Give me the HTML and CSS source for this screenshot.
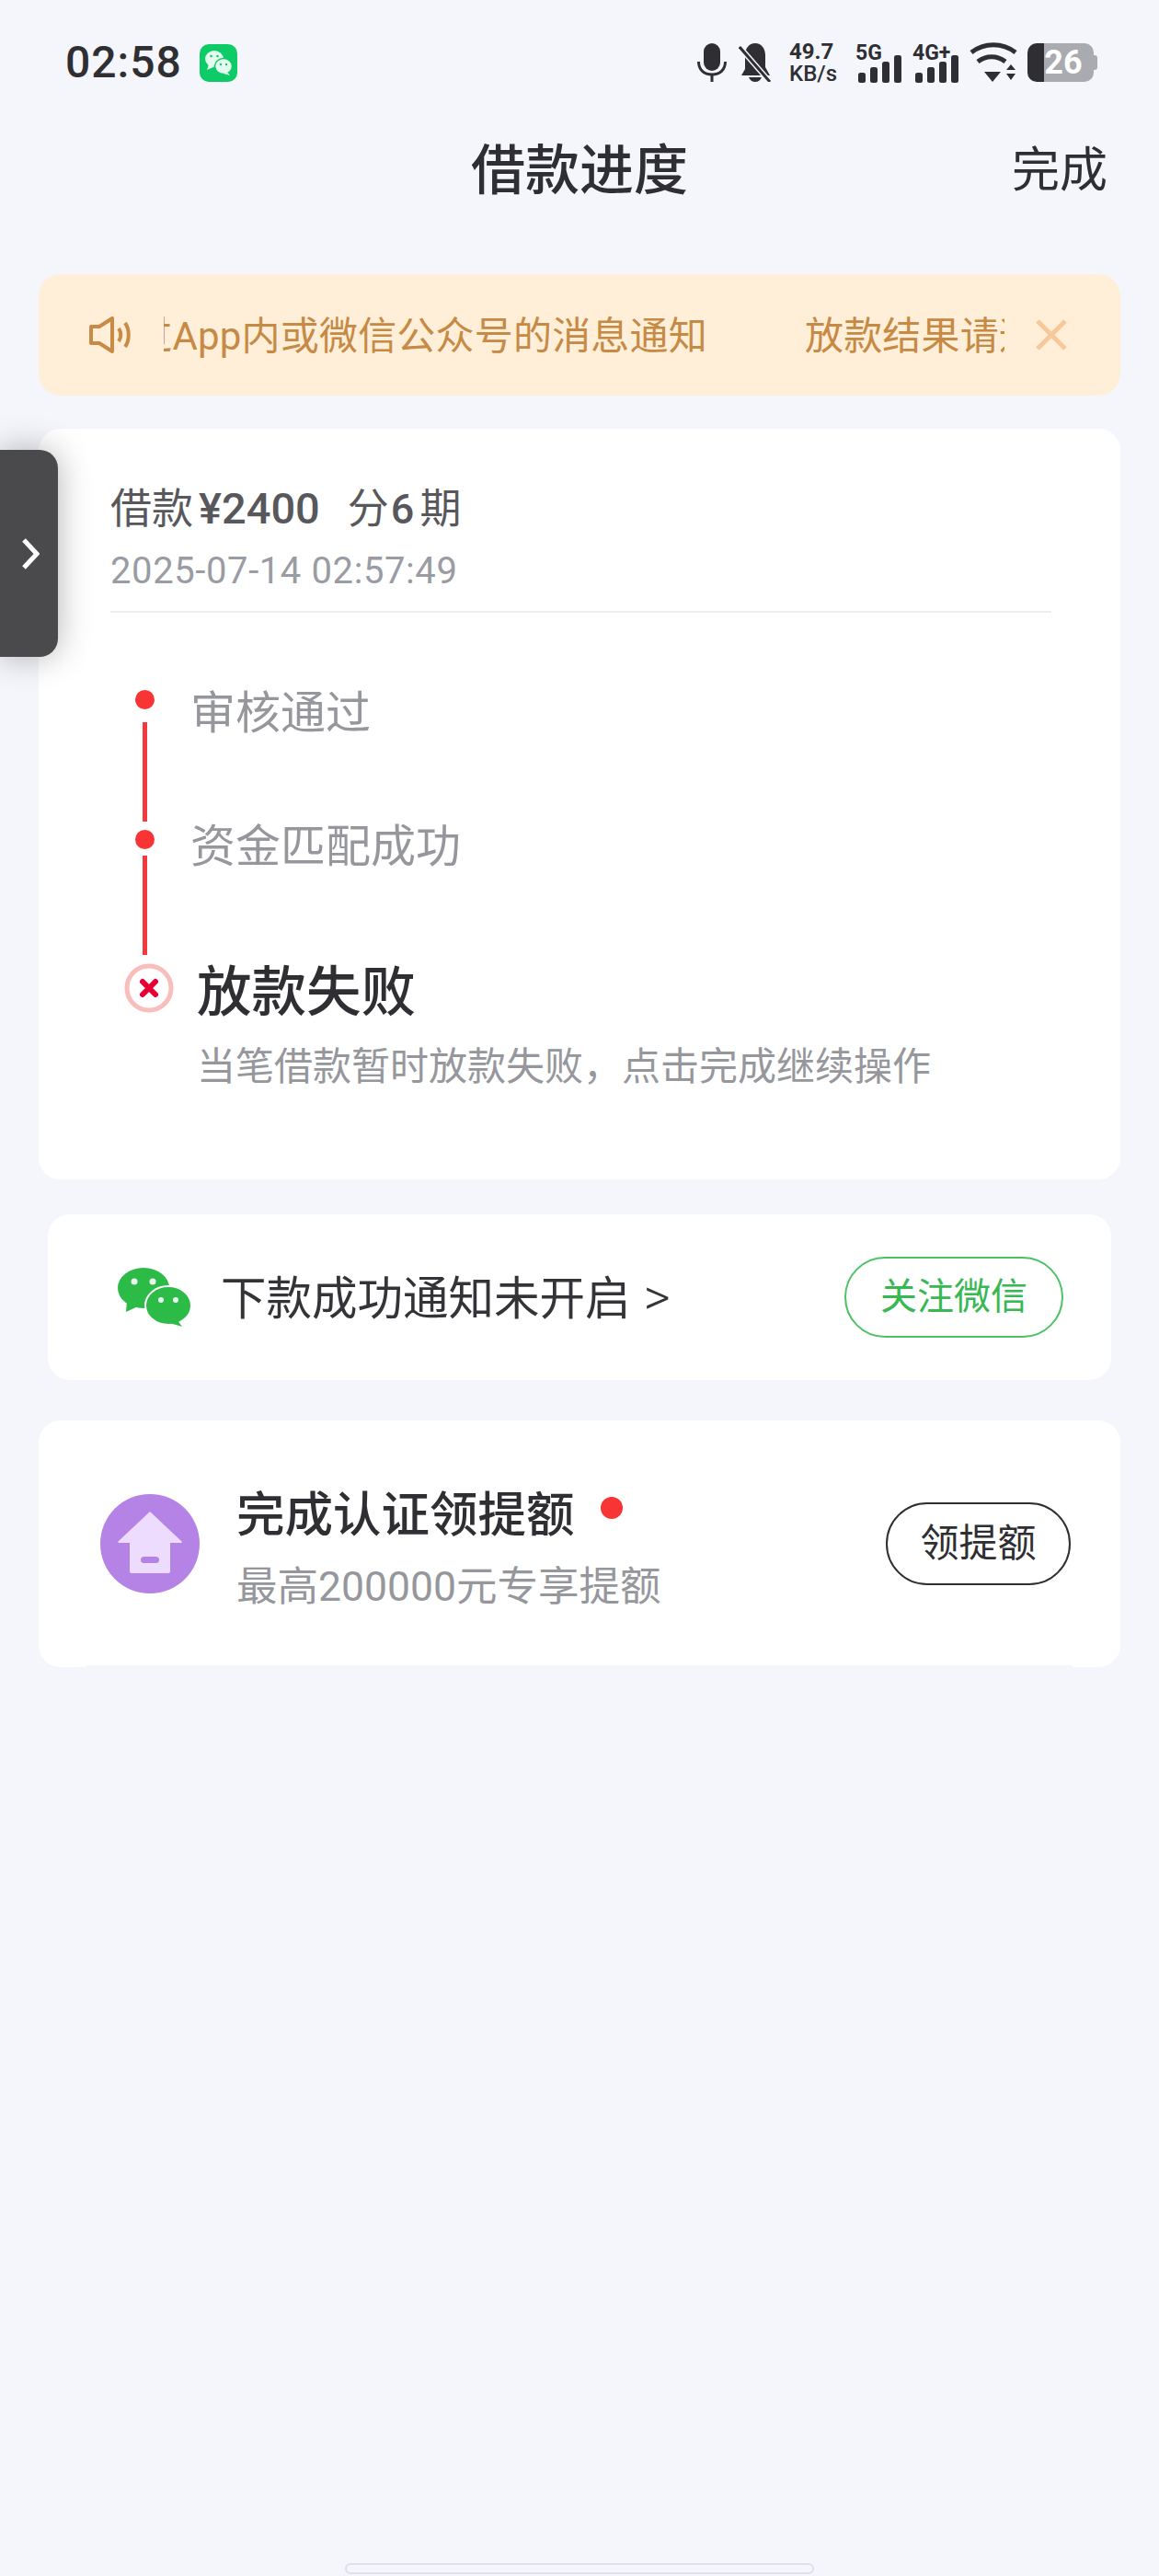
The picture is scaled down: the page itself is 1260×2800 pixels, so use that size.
FILE: index.html
```html
<!DOCTYPE html>
<html lang="zh-CN">
<head>
    <meta charset="UTF-8">
    <meta name="viewport" content="width=device-width, initial-scale=1.0">
    <title>借款进度</title>
    <link rel="stylesheet" href="styles.css">
</head>
<body>
    <div class="page">
        <div class="status-bar">
            <div class="status-left">
                <span class="clock">02:58</span>
                <svg class="wx-badge" viewBox="0 0 41 41" width="41" height="41">
                    <rect width="41" height="41" rx="10" fill="#0dcb66"/>
                    <ellipse cx="16" cy="16" rx="10" ry="9" fill="#e6fbef"/>
                    <path d="M10 22l-2 6 7-3z" fill="#e6fbef"/>
                    <ellipse cx="26" cy="24" rx="9.500" ry="8.500" fill="#e6fbef" stroke="#0dcb66" stroke-width="1.500"/>
                    <path d="M30 30l3 4-7-2z" fill="#e6fbef"/>
                    <circle cx="12.500" cy="13" r="1.300" fill="#0dcb66"/>
                    <circle cx="19.500" cy="13" r="1.300" fill="#0dcb66"/>
                    <circle cx="23" cy="22" r="1.200" fill="#0dcb66"/>
                    <circle cx="29" cy="22" r="1.200" fill="#0dcb66"/>
                </svg>
            </div>
            <div class="status-right">
                <svg viewBox="0 0 32 42" width="32" height="42">
                    <rect x="7" y="0" width="18" height="30" rx="9" fill="#2f2f33"/>
                    <path d="M1.500 20c0 9 6 14 14.500 14s14.500-5 14.500-14" fill="none" stroke="#2f2f33" stroke-width="3"/>
                    <path d="M16 34v8" stroke="#2f2f33" stroke-width="3"/>
                </svg>
                <svg class="bell" viewBox="0 0 36 42" width="36" height="42">
                    <path d="M18 0c7 0 11 6 11 13v13l5 9H3l4-7V13C7 6 11 0 18 0z" fill="#2f2f33"/>
                    <path d="M11 37h14c-1 3-4 5-7 5s-6-2-7-5z" fill="#2f2f33"/>
                    <path d="M1 4l33 38" stroke="#f4f6fb" stroke-width="6"/>
                    <path d="M1 4l33 38" stroke="#2f2f33" stroke-width="3"/>
                </svg>
                <span class="speed"><b>49.7</b><b class="speed-unit">KB/s</b></span>
                <svg class="signal" viewBox="0 0 50 44" width="50" height="44">
                    <text x="0" y="19" class="net-label">5G</text>
                    <rect x="3" y="33" width="8" height="11" rx="2.500" fill="#2f2f33"/>
                    <rect x="16" y="27" width="8" height="17" rx="2.500" fill="#2f2f33"/>
                    <rect x="29" y="21" width="8" height="23" rx="2.500" fill="#2f2f33"/>
                    <rect x="42" y="14" width="8" height="30" rx="2.500" fill="#2f2f33"/>
                </svg>
                <svg class="signal" viewBox="0 0 50 44" width="50" height="44">
                    <text x="0" y="19" class="net-label">4G+</text>
                    <rect x="3" y="33" width="8" height="11" rx="2.500" fill="#2f2f33"/>
                    <rect x="16" y="27" width="8" height="17" rx="2.500" fill="#2f2f33"/>
                    <rect x="29" y="21" width="8" height="23" rx="2.500" fill="#2f2f33"/>
                    <rect x="42" y="14" width="8" height="30" rx="2.500" fill="#2f2f33"/>
                </svg>
                <svg class="wifi" viewBox="0 0 52 44" width="52" height="44">
                    <path d="M2 11c14-11 34-11 48 0" fill="none" stroke="#2f2f33" stroke-width="5"/>
                    <path d="M9 21c9-7 21-7 30 0" fill="none" stroke="#2f2f33" stroke-width="5"/>
                    <path d="M16 32h18l-9 11z" fill="#2f2f33"/>
                    <path d="M40 30l5-6 5 6zM40 34h10l-5 7z" fill="#2f2f33"/>
                </svg>
                <div class="battery"><span>26</span></div>
            </div>
        </div>

        <div class="nav">
            <span></span>
            <h1 class="nav-title">借款进度</h1>
            <span class="nav-done">完成</span>
        </div>

        <div class="side-tab">
            <svg viewBox="0 0 20 34" width="20" height="34"><path d="M3 2l14 15L3 32" fill="none" stroke="#fff" stroke-width="5"/></svg>
        </div>

        <div class="notice">
            <svg class="notice-icon" viewBox="0 0 48 40" width="48" height="40">
                <path d="M3 11h9L26 2v36l-14-9H3z" fill="none" stroke="#c98a45" stroke-width="4" stroke-linejoin="round"/>
                <path d="M33 13c3 4 3 10 0 14" fill="none" stroke="#c98a45" stroke-width="4"/>
                <path d="M40 7c5 7 5 19 0 26" fill="none" stroke="#c98a45" stroke-width="4"/>
            </svg>
            <div class="notice-clip">
                <div class="notice-track">
                    <span>放款结果请通过App内或微信公众号的消息通知</span>
                    <span>放款结果请通过App内或微信公众号的消息通知</span>
                </div>
            </div>
            <svg class="notice-close" viewBox="0 0 34 34" width="34" height="34"><path d="M2 2l30 30M32 2L2 32" stroke="#f6c89a" stroke-width="5"/></svg>
        </div>

        <div class="card progress">
            <div class="loan-head">
                <div class="loan-title">借款<b class="loan-amount">¥2400</b><span class="loan-term">分<b class="loan-count">6</b>期</span></div>
                <div class="loan-time">2025-07-14 02:57:49</div>
            </div>
            <div class="steps">
                <div class="step">
                    <div class="rail"><i class="dot"></i><i class="line"></i></div>
                    <div class="step-name">审核通过</div>
                </div>
                <div class="step step-two">
                    <div class="rail"><i class="dot"></i><i class="line"></i></div>
                    <div class="step-name">资金匹配成功</div>
                </div>
                <div class="step step-fail">
                    <svg class="fail-icon" viewBox="0 0 54 54" width="54" height="54">
                        <circle cx="27" cy="27" r="24" fill="#fff" stroke="#fbbcbc" stroke-width="5"/>
                        <path d="M20 20l14 14M34 20L20 34" stroke="#e60033" stroke-width="6" stroke-linecap="round"/>
                    </svg>
                    <div>
                        <div class="fail-name">放款失败</div>
                        <div class="fail-desc">当笔借款暂时放款失败&#xFF0C;点击完成继续操作</div>
                    </div>
                </div>
            </div>
        </div>

        <div class="card wechat-row">
            <svg class="wx-icon" viewBox="0 0 80 64" width="80" height="64">
                <path d="M10 36L9 48l13-6z" fill="#2dbb48"/>
                <ellipse cx="28" cy="22" rx="28" ry="22" fill="#2dbb48"/>
                <circle cx="18" cy="15" r="3.500" fill="#e8f8ec"/>
                <circle cx="38" cy="15" r="3.500" fill="#e8f8ec"/>
                <ellipse cx="55" cy="41" rx="25" ry="21" fill="#2dbb48" stroke="#fff" stroke-width="2"/>
                <path d="M64 56l6 8-14-4z" fill="#2dbb48"/>
                <circle cx="47" cy="35" r="3" fill="#e8f8ec"/>
                <circle cx="63" cy="35" r="3" fill="#e8f8ec"/>
            </svg>
            <span class="wechat-text">下款成功通知未开启 <span class="wechat-arrow">&gt;</span></span>
            <span class="btn-follow">关注微信</span>
        </div>

        <div class="card promo">
            <svg class="promo-icon" viewBox="0 0 108 108" width="108" height="108">
                <circle cx="54" cy="54" r="54" fill="#b583e6"/>
                <path d="M54 19L88 51a1 1 0 0 1-1 2H76v31a2 2 0 0 1-2 2H34a2 2 0 0 1-2-2V53H21a1 1 0 0 1-1-2z" fill="#eedcff"/>
                <rect x="44" y="68" width="20" height="7" rx="3.500" fill="#b583e6"/>
            </svg>
            <div class="promo-body">
                <div class="promo-title">完成认证领提额<i class="red-dot"></i></div>
                <div class="promo-sub">最高200000元专享提额</div>
            </div>
            <span class="btn-claim">领提额</span>
        </div>

        <div class="home-bar"></div>
    </div>
</body>
</html>
```

FILE: styles.css
```css
* {
    box-sizing: border-box;
}
body {
    margin: 0;
    background-color: #f4f6fb;
    font-family: 'Roboto', 'Noto Sans CJK SC', sans-serif;
    color: #2f2f33;
}
.page {
    position: relative;
    display: flex;
    flex-direction: column;
    height: 2800px;
    overflow: hidden;
}
.status-bar {
    display: flex;
    justify-content: space-between;
    align-items: center;
    height: 136px;
    padding: 0 71px 0 71px;
}
.status-left {
    display: flex;
    align-items: center;
}
.clock {
    font-size: 48px;
    font-weight: 500;
    letter-spacing: 1px;
    line-height: 50px;
}
.wx-badge {
    margin-left: 19px;
}
.status-right {
    display: flex;
    align-items: center;
    height: 44px;
}
.bell {
    margin-left: 13px;
}
.speed {
    display: flex;
    flex-direction: column;
    margin: 0 20px 0 19px;
    font-size: 24px;
    line-height: 24px;
}
.speed-unit {
    font-weight: 500;
}
.signal {
    margin-right: 12px;
    overflow: visible;
}
.net-label {
    font-size: 23px;
    font-weight: 700;
    fill: #2f2f33;
}
.wifi {
    margin-right: 11px;
}
.battery {
    position: relative;
    width: 72px;
    height: 42px;
    border-radius: 10px;
    background: linear-gradient(90deg, #2f2f33 25%, #a9abb0 25%);
    color: #fff;
    font-size: 36px;
    font-weight: 700;
    line-height: 42px;
    text-align: center;
}
.battery span {
    margin-left: 6px;
}
.battery::after {
    content: "";
    position: absolute;
    right: -4px;
    top: 13px;
    width: 4px;
    height: 16px;
    border-radius: 0 3px 3px 0;
    background: #a9abb0;
}
.nav {
    display: grid;
    grid-template-columns: 1fr auto 1fr;
    align-items: center;
    height: 96px;
    padding: 4px 56px 0 0;
}
.nav-title {
    margin: 0;
    padding-left: 56px;
    font-size: 59px;
    font-weight: 500;
    line-height: 92px;
}
.nav-done {
    justify-self: end;
    font-size: 52px;
    line-height: 60px;
}
.side-tab {
    position: absolute;
    left: 0;
    top: 489px;
    display: flex;
    align-items: center;
    width: 63px;
    height: 225px;
    padding-left: 23px;
    border-radius: 0 20px 20px 0;
    background: #4a4a4c;
    box-shadow: 0 0 36px rgba(0, 0, 0, 0.3);
}
.notice {
    display: flex;
    align-items: center;
    height: 132px;
    margin: 66px 42px 0;
    padding: 0 58px 0 54px;
    border-radius: 24px;
    background: #ffefd9;
}
.notice-clip {
    flex: 1;
    margin-left: 34px;
    overflow: hidden;
}
.notice-track {
    display: flex;
    gap: 106px;
    margin-left: -286px;
    padding-top: 4px;
    white-space: nowrap;
    color: #c68a45;
    font-size: 42px;
    letter-spacing: 0.200px;
    line-height: 60px;
}
.notice-close {
    margin-left: 34px;
}
.card {
    background: #fff;
    border-radius: 24px;
}
.progress {
    height: 816px;
    margin: 36px 42px 0;
    padding: 0 75px 0 78px;
}
.loan-head {
    height: 200px;
    padding-top: 60px;
    border-bottom: 2px solid #eeeeee;
}
.loan-title {
    color: #58585c;
    font-size: 45px;
    line-height: 54px;
}
.loan-title b {
    font-weight: 500;
}
.loan-amount {
    margin-left: 6px;
    font-size: 47px;
}
.loan-term {
    margin-left: 30px;
}
.loan-count {
    margin: 0 6px 0 2px;
}
.loan-time {
    margin-top: 17px;
    color: #9a9ca3;
    font-size: 40px;
    letter-spacing: 0.600px;
    line-height: 46px;
}
.steps {
    padding-top: 84px;
}
.step {
    display: flex;
    height: 152px;
}
.rail {
    display: flex;
    flex-direction: column;
    align-items: center;
    width: 21px;
    margin-left: 27px;
}
.dot {
    width: 21px;
    height: 21px;
    border-radius: 50%;
    background: #f93434;
}
.line {
    width: 5px;
    height: 108px;
    margin-top: 14px;
    background: #f23a3d;
}
.step-name {
    margin: -4px 0 0 39px;
    color: #96979c;
    font-size: 49px;
    line-height: 60px;
}
.step-two {
    height: 140px;
}
.step-two .line {
    margin-top: 7px;
}
.step-two .step-name {
    margin-top: -11px;
}
.step-fail {
    height: auto;
    margin-left: 15px;
}
.fail-icon {
    flex: none;
    margin-top: 5px;
}
.fail-name {
    margin-left: 25px;
    font-size: 59.500px;
    font-weight: 500;
    line-height: 74px;
}
.fail-desc {
    margin: 14px 0 0 25px;
    color: #96979c;
    font-size: 42px;
    line-height: 60px;
    white-space: nowrap;
}
.wechat-row {
    display: flex;
    align-items: center;
    height: 180px;
    margin: 38px 52px 0;
    padding: 0 52px 0 76px;
}
.wechat-text {
    flex: 1;
    margin: 2px 0 0 32px;
    color: #333338;
    font-size: 49.500px;
    line-height: 60px;
}
.wechat-arrow {
    margin-left: 2px;
    font-size: 56px;
    font-weight: 300;
}
.btn-follow {
    width: 238px;
    height: 88px;
    border: 2px solid #4cc265;
    border-radius: 44px;
    color: #37b853;
    font-size: 40px;
    line-height: 84px;
    text-align: center;
}
.promo {
    position: relative;
    display: flex;
    align-items: center;
    height: 268px;
    margin: 44px 42px 0;
    padding: 0 54px 0 67px;
}
.promo::after {
    content: "";
    position: absolute;
    left: 52px;
    right: 52px;
    bottom: 0;
    height: 2px;
    background: #f4f6fb;
}
.promo-body {
    flex: 1;
    margin-left: 40px;
    padding-top: 12px;
}
.promo-title {
    display: flex;
    align-items: flex-start;
    font-size: 52.500px;
    font-weight: 500;
    line-height: 68px;
}
.red-dot {
    width: 24px;
    height: 24px;
    margin: 14px 0 0 28px;
    border-radius: 50%;
    background: #f93434;
}
.promo-sub {
    margin-top: 14px;
    color: #96979c;
    font-size: 44.500px;
    line-height: 60px;
}
.btn-claim {
    width: 201px;
    height: 90px;
    border: 2px solid #2f2f33;
    border-radius: 45px;
    font-size: 42px;
    line-height: 86px;
    text-align: center;
}
.home-bar {
    width: 510px;
    height: 12px;
    margin: auto auto 2px;
    border: 2px solid #dfe1e8;
    border-radius: 6px;
}
```
